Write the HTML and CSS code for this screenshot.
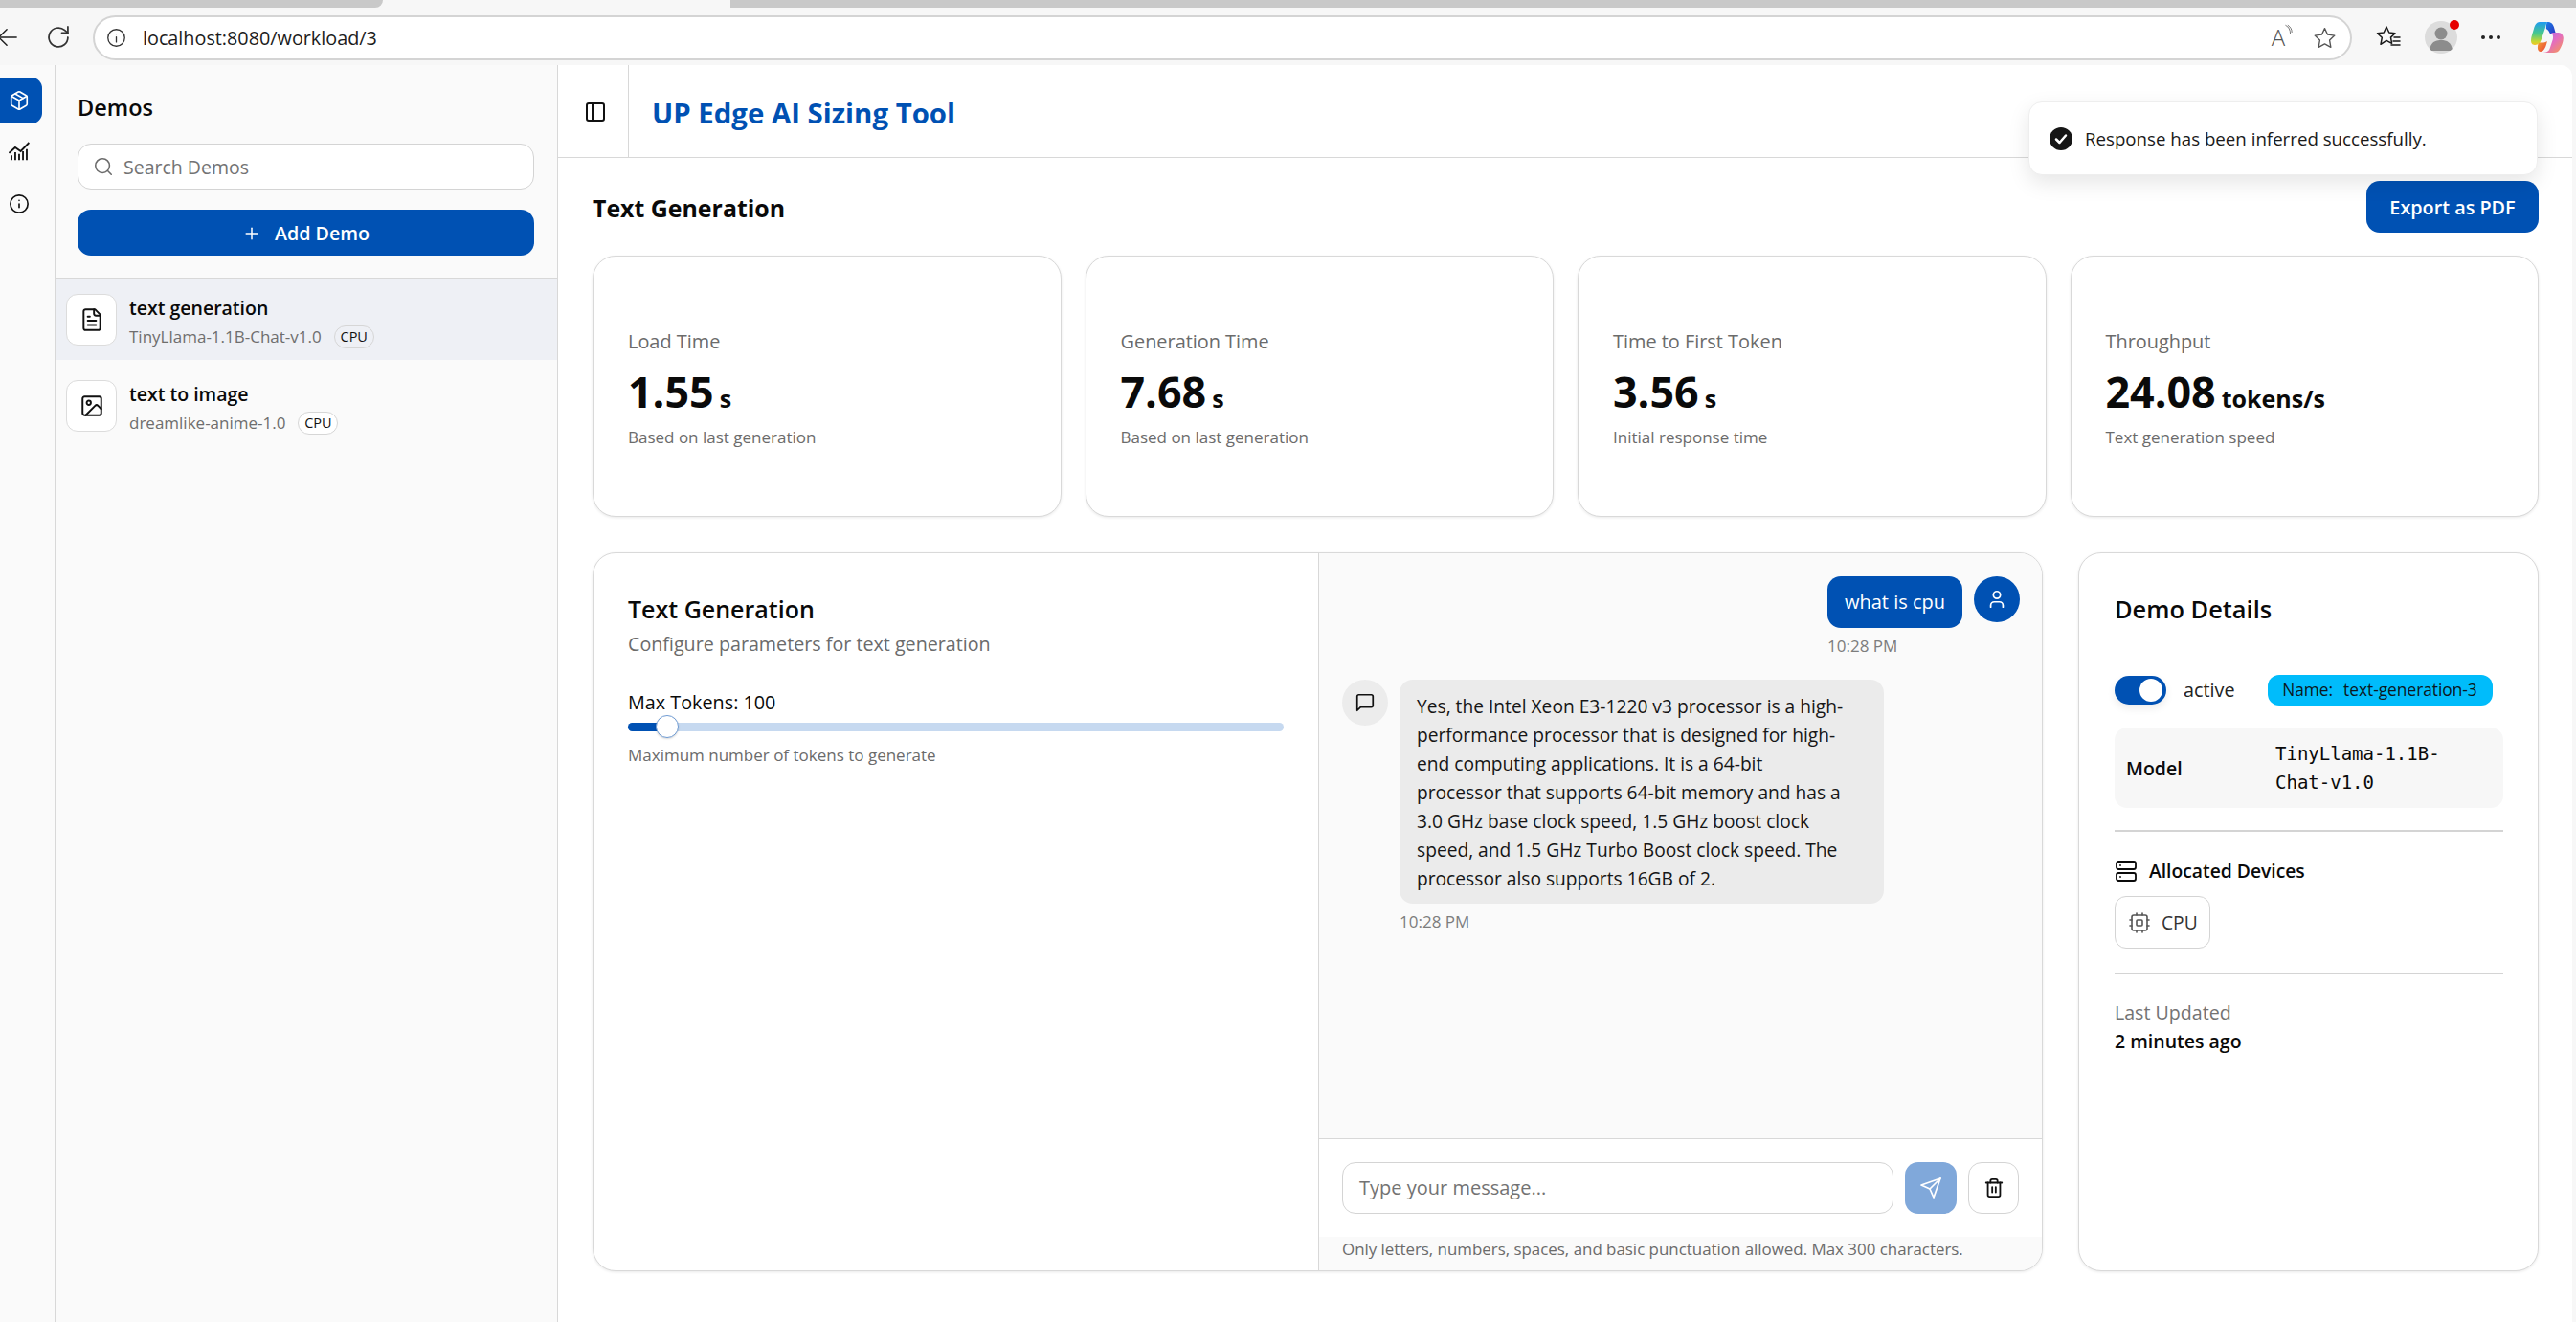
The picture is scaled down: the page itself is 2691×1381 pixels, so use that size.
FILE: index.html
```html
<!DOCTYPE html>
<html lang="en">
<head>
<meta charset="utf-8">
<title>UP Edge AI Sizing Tool</title>
<link rel="stylesheet" href="styles.css">
</head>
<body>
<div class="tabstrip"><span class="tab-a"></span><span class="tab-gap"></span><span class="tab-b"></span></div>
<div class="toolbar">
  <svg class="ic back" viewBox="0 0 24 24"><path d="M22 12H2"/><path d="M11 3l-9 9 9 9"/></svg>
  <svg class="ic reload" viewBox="0 0 24 24"><path d="M20.500 12a8.500 8.500 0 1 1-3-6.500L20.500 8"/><path d="M20.500 2.500V8H15"/></svg>
  <div class="addr">
    <svg class="ic addr-info" viewBox="0 0 24 24"><circle cx="12" cy="12" r="10"/><path d="M12 17v-6"/><path d="M12 7.500h.01"/></svg>
    <span class="url">localhost:8080/workload/3</span>
    <span class="read"><span class="read-a">A</span><svg class="ic read-w" viewBox="0 0 10 16"><path d="M1 1c4 2 6 6 6 11"/><path d="M4 1c3 2 5 5 5 9"/></svg></span>
    <svg class="ic addr-star" viewBox="0 0 24 24"><path d="M12 2.500l3 6.300 6.900.9-5 4.800 1.200 6.900-6.100-3.300-6.100 3.300 1.200-6.900-5-4.800 6.900-.9z"/></svg>
  </div>
  <svg class="ic fav" viewBox="0 0 28 28"><path d="M12 3l2.800 6 6.200.8-4.500 4.300 1.100 6.200-5.600-3-6 4 1.300-7-4.800-4.500 6.700-.8z"/><path d="M20 14h6"/><path d="M19 18h7"/><path d="M17 22h9"/></svg>
  <span class="avatar"><svg viewBox="0 0 34 34"><circle cx="17" cy="13" r="6.500"/><path d="M5 31c1-9 6-11 12-11s11 2 12 11z"/></svg><i class="dot"></i></span>
  <span class="more"><i></i><i></i><i></i></span>
  <svg class="copilot" viewBox="0 0 34 32">
    <defs>
      <linearGradient id="cpa" x1="0" y1="0" x2="0" y2="1"><stop offset="0" stop-color="#1f9bf0"/><stop offset=".5" stop-color="#48c98a"/><stop offset=".85" stop-color="#c8d733"/><stop offset="1" stop-color="#f3c623"/></linearGradient>
      <linearGradient id="cpb" x1="0" y1="0" x2="1" y2="1"><stop offset="0" stop-color="#9a6cf0"/><stop offset=".5" stop-color="#e36cc0"/><stop offset="1" stop-color="#f79a50"/></linearGradient>
      <linearGradient id="cpc" x1="0" y1="0" x2="1" y2="1"><stop offset="0" stop-color="#f5a030"/><stop offset="1" stop-color="#e8413c"/></linearGradient>
      <linearGradient id="cpd" x1="0" y1="0" x2="1" y2="1"><stop offset="0" stop-color="#1a7fe8"/><stop offset="1" stop-color="#2b35c0"/></linearGradient>
    </defs>
    <path fill="url(#cpc)" d="M8 21c3 1 6 1 9-1-1 5-3 11-7 11-3 0-4-4-2-10z"/>
    <path fill="url(#cpd)" d="M17 0c4 0 6 2 7 5l2 7h-6c-1-2-2-4-4-5 0-3 0-6 1-7z"/>
    <path fill="url(#cpa)" d="M9 0h9c-2 0-2 3-3 6L11 18c-1 3-3 6-7 6-3 0-4-2-4-5 0-3 2-8 3-12C4 3 6 0 9 0z"/>
    <path fill="url(#cpb)" d="M21 11h8c3 0 5 3 5 6 0 4-2 9-4 12-1 2-3 3-6 3H11c5 0 8-1 9-5l3-9c.5-3 0-6-2-7z"/>
  </svg>
</div>
<div class="app">
  <nav class="rail">
    <a class="rail-btn is-active"><svg class="ic rail-ic" viewBox="0 0 24 24"><path d="m7.500 4.270 9 5.150"/><path d="M21 8a2 2 0 0 0-1-1.730l-7-4a2 2 0 0 0-2 0l-7 4A2 2 0 0 0 3 8v8a2 2 0 0 0 1 1.730l7 4a2 2 0 0 0 2 0l7-4A2 2 0 0 0 21 16Z"/><path d="m3.300 7 8.700 5 8.700-5"/><path d="M12 22V12"/></svg></a>
    <a class="rail-btn"><svg class="ic rail-chart" viewBox="0 0 24 24"><path d="M.5 13l7-6.500 6.300 4.400L23.300 1.100"/><path d="M3.300 21v-5.400"/><path d="M7.600 21v-9"/><path d="M12 21v-7.200"/><path d="M16.400 21V10.900"/><path d="M20.700 21V8.400"/></svg></a>
    <a class="rail-btn"><svg class="ic rail-ic" viewBox="0 0 24 24"><circle cx="12" cy="12" r="10"/><path d="M12 16v-4"/><path d="M12 8h.01"/></svg></a>
  </nav>
  <aside class="sidebar">
    <div class="side-top">
      <h2 class="side-title">Demos</h2>
      <div class="search">
        <svg class="ic search-ic" viewBox="0 0 24 24"><circle cx="11" cy="11" r="8"/><path d="m21 21-4.300-4.300"/></svg>
        <span class="search-ph">Search Demos</span>
      </div>
      <button class="add-btn"><svg class="ic add-ic" viewBox="0 0 24 24"><path d="M5 12h14"/><path d="M12 5v14"/></svg>Add Demo</button>
    </div>
    <div class="demo is-selected">
      <span class="demo-icon"><svg class="ic demo-ic" viewBox="0 0 24 24"><path d="M15 2H6a2 2 0 0 0-2 2v16a2 2 0 0 0 2 2h12a2 2 0 0 0 2-2V7Z"/><path d="M14 2v4a2 2 0 0 0 2 2h4"/><path d="M10 9H8"/><path d="M16 13H8"/><path d="M16 17H8"/></svg></span>
      <div class="demo-text">
        <div class="demo-name">text generation</div>
        <div class="demo-sub"><span>TinyLlama-1.1B-Chat-v1.0</span><span class="badge">CPU</span></div>
      </div>
    </div>
    <div class="demo">
      <span class="demo-icon"><svg class="ic demo-ic" viewBox="0 0 24 24"><rect x="3" y="3" width="18" height="18" rx="2"/><circle cx="9" cy="9" r="2"/><path d="m21 15-3.086-3.086a2 2 0 0 0-2.828 0L6 21"/></svg></span>
      <div class="demo-text">
        <div class="demo-name">text to image</div>
        <div class="demo-sub"><span>dreamlike-anime-1.0</span><span class="badge">CPU</span></div>
      </div>
    </div>
  </aside>
  <main class="main">
    <header class="topbar">
      <span class="toggle-cell"><svg class="ic panel-ic" viewBox="0 0 24 24"><rect x="3" y="3" width="18" height="18" rx="2"/><path d="M9 3v18"/></svg></span>
      <h1 class="app-title">UP Edge AI Sizing Tool</h1>
    </header>
    <div class="toast">
      <svg class="toast-ic" viewBox="0 0 24 24"><circle cx="12" cy="12" r="12"/><path d="M7 12.500l3.500 3.500L17 8.500"/></svg>
      <span>Response has been inferred successfully.</span>
    </div>
    <section class="content">
      <div class="page-head">
        <h2 class="page-title">Text Generation</h2>
        <button class="export">Export as PDF</button>
      </div>
      <div class="stats">
        <div class="card stat"><div class="stat-label">Load Time</div><div class="stat-value">1.55<span class="unit">s</span></div><div class="stat-sub">Based on last generation</div></div>
        <div class="card stat"><div class="stat-label">Generation Time</div><div class="stat-value">7.68<span class="unit">s</span></div><div class="stat-sub">Based on last generation</div></div>
        <div class="card stat"><div class="stat-label">Time to First Token</div><div class="stat-value">3.56<span class="unit">s</span></div><div class="stat-sub">Initial response time</div></div>
        <div class="card stat"><div class="stat-label">Throughput</div><div class="stat-value">24.08<span class="unit">tokens/s</span></div><div class="stat-sub">Text generation speed</div></div>
      </div>
      <div class="lower">
        <div class="card workspace">
          <div class="params">
            <h3 class="params-title">Text Generation</h3>
            <p class="params-sub">Configure parameters for text generation</p>
            <div class="param-label">Max Tokens: 100</div>
            <div class="slider"><span class="slider-fill"></span><span class="slider-thumb"></span></div>
            <div class="param-help">Maximum number of tokens to generate</div>
          </div>
          <div class="chat">
            <div class="messages">
              <div class="msg msg-user">
                <div class="msg-col">
                  <div class="bubble bubble-user">what is cpu</div>
                  <div class="msg-time">10:28 PM</div>
                </div>
                <span class="msg-avatar avatar-user"><svg class="ic msg-ic" viewBox="0 0 24 24"><path d="M19 21v-2a4 4 0 0 0-4-4H9a4 4 0 0 0-4 4v2"/><circle cx="12" cy="7" r="4"/></svg></span>
              </div>
              <div class="msg">
                <span class="msg-avatar avatar-bot"><svg class="ic msg-ic" viewBox="0 0 24 24"><path d="M21 15a2 2 0 0 1-2 2H7l-4 4V5a2 2 0 0 1 2-2h14a2 2 0 0 1 2 2z"/></svg></span>
                <div class="msg-col">
                  <div class="bubble bubble-bot">Yes, the Intel Xeon E3-1220 v3 processor is a high-<br>performance processor that is designed for high-<br>end computing applications. It is a 64-bit<br>processor that supports 64-bit memory and has a<br>3.0 GHz base clock speed, 1.5 GHz boost clock<br>speed, and 1.5 GHz Turbo Boost clock speed. The<br>processor also supports 16GB of 2.</div>
                  <div class="msg-time">10:28 PM</div>
                </div>
              </div>
            </div>
            <div class="composer">
              <div class="chat-input">Type your message...</div>
              <button class="send"><svg class="ic send-ic" viewBox="0 0 24 24"><path d="m22 2-7 20-4-9-9-4Z"/><path d="M22 2 11 13"/></svg></button>
              <button class="trash"><svg class="ic trash-ic" viewBox="0 0 24 24"><path d="M3 6h18"/><path d="M19 6v14c0 1-1 2-2 2H7c-1 0-2-1-2-2V6"/><path d="M8 6V4c0-1 1-2 2-2h4c1 0 2 1 2 2v2"/><path d="M10 11v6"/><path d="M14 11v6"/></svg></button>
            </div>
            <div class="hint">Only letters, numbers, spaces, and basic punctuation allowed. Max 300 characters.</div>
          </div>
        </div>
        <div class="card details">
          <h3 class="details-title">Demo Details</h3>
          <div class="status-row">
            <span class="switch"><span class="switch-thumb"></span></span>
            <span class="status-text">active</span>
            <span class="name-badge"><span>Name:</span><span>text-generation-3</span></span>
          </div>
          <div class="model-box"><span class="model-key">Model</span><code class="model-val">TinyLlama-1.1B-Chat-v1.0</code></div>
          <div class="rule rule-thick"></div>
          <div class="alloc"><svg class="ic alloc-ic" viewBox="0 0 24 24"><rect x="2" y="2" width="20" height="8" rx="2"/><rect x="2" y="14" width="20" height="8" rx="2"/><path d="M6 6h.01"/><path d="M6 18h.01"/></svg>Allocated Devices</div>
          <div class="chip"><svg class="ic chip-ic" viewBox="0 0 24 24"><rect x="4" y="4" width="16" height="16" rx="2"/><rect x="9" y="9" width="6" height="6" rx="1"/><path d="M15 2v2"/><path d="M15 20v2"/><path d="M2 15h2"/><path d="M2 9h2"/><path d="M20 15h2"/><path d="M20 9h2"/><path d="M9 2v2"/><path d="M9 20v2"/></svg>CPU</div>
          <div class="rule rule-thin"></div>
          <div class="updated-label">Last Updated</div>
          <div class="updated-val">2 minutes ago</div>
        </div>
      </div>
    </section>
  </main>
</div>
</body>
</html>
```
FILE: styles.css
```css
* { box-sizing: border-box; }
html, body { margin: 0; padding: 0; }
body {
  width: 2691px;
  height: 1381px;
  overflow: hidden;
  background: #f7f7f7;
  font-family: "Open Sans", "Noto Sans", sans-serif;
  color: #0a0a0a;
}
h1, h2, h3, p { margin: 0; }
button { font-family: inherit; border: 0; padding: 0; }

.ic { fill: none; stroke: currentColor; stroke-width: 2; stroke-linecap: round; stroke-linejoin: round; flex: none; display: block; }

/* browser chrome */
.tabstrip { display: flex; height: 8px; background: #f7f7f7; }
.tab-a { width: 400px; background: #c9c9c9; border-bottom-right-radius: 8px; }
.tab-gap { width: 363px; }
.tab-b { flex: 1; background: #c9c9c9; }
.toolbar { height: 60px; display: flex; align-items: center; padding: 2px 13px 0 0; background: #f7f7f7; position: relative; }
.back { width: 22px; height: 22px; margin-left: -3px; stroke-width: 1.600; color: #1f1f1f; }
.reload { width: 28px; height: 28px; margin-left: 28px; stroke-width: 1.500; color: #333; }
.addr { width: 2375px; height: 47px; margin-left: 22px; border: 2px solid #d4d4d4; border-radius: 24px; background: #fff; display: flex; align-items: center; padding: 0 14px 0 12px; }
.addr-info { width: 21px; height: 21px; stroke-width: 1.500; color: #333; }
.url { font-size: 19.800px; margin-left: 17px; color: #1c1c1c; flex: 1; }
.read { display: flex; margin-right: 21px; color: #555; position: relative; }
.read-a { font-size: 24px; line-height: 28px; font-weight: 300; }
.read-w { width: 8px; height: 14px; stroke-width: 1; }
.addr-star { width: 25px; height: 25px; stroke-width: 1.300; color: #555; }
.fav { width: 28px; height: 28px; margin-left: 24px; stroke-width: 1.500; color: #1a1a1a; }
.avatar { position: relative; width: 34px; height: 34px; margin-left: 24px; border-radius: 50%; background: #dcdcdc; overflow: visible; }
.avatar svg { display: block; width: 34px; height: 34px; fill: #8c8c8c; border-radius: 50%; }
.dot { position: absolute; right: -2px; top: -1px; width: 10px; height: 10px; border-radius: 50%; background: #e60000; }
.more { display: flex; gap: 4px; margin-left: 25px; }
.more i { width: 4px; height: 4px; border-radius: 50%; background: #222; }
.copilot { width: 34px; height: 32px; margin-left: 32px; }

/* app frame */
.app { display: flex; height: 1313px; width: 2687px; }
.rail { width: 58px; flex: none; background: #fafafa; border-right: 1px solid #d8d8d8; padding-top: 13px; display: flex; flex-direction: column; gap: 6px; overflow: hidden; }
.rail-btn { width: 49px; height: 48px; margin-left: -5px; border-radius: 0 11px 11px 0; display: flex; align-items: center; justify-content: center; color: #111; }
.rail-btn.is-active { background: #0051b3; color: #fff; }
.rail-ic { width: 22px; height: 22px; stroke-width: 1.800; }
.rail-chart { width: 22px; height: 22px; stroke-width: 2; stroke-linecap: butt; stroke-linejoin: miter; }

/* sidebar */
.sidebar { width: 525px; flex: none; background: #fafafa; border-right: 1px solid #d8d8d8; }
.side-top { padding: 30px 24px 23px 23px; border-bottom: 1px solid #d8d8d8; }
.side-title { font-size: 23.500px; font-weight: 600; line-height: 30px; margin-top: -1px; padding-bottom: 1px; }
.search { height: 48px; margin-top: 22px; background: #fff; border: 1px solid #d4d4d4; border-radius: 14px; display: flex; align-items: center; padding-left: 15px; gap: 10px; }
.search-ic { width: 22px; height: 22px; color: #6b6b6b; stroke-width: 1.700; }
.search-ph { font-size: 19.500px; color: #737373; }
.add-btn { width: 100%; height: 48px; margin-top: 21px; padding-top: 1px; background: #0051b3; color: #fff; border-radius: 14px; font-size: 19.700px; font-weight: 600; display: flex; align-items: center; justify-content: center; gap: 14px; }
.add-ic { width: 20px; height: 20px; stroke-width: 1.800; }
.demo { height: 85px; padding: 16px 12px 0 11px; display: flex; gap: 13px; margin-bottom: 5px; }
.demo.is-selected { background: #eef0f5; }
.demo-icon { width: 53px; height: 54px; background: #fff; border: 1px solid #dcdcdc; border-radius: 12px; display: flex; align-items: center; justify-content: center; flex: none; }
.demo-ic { width: 26px; height: 26px; stroke-width: 1.800; color: #111; }
.demo-name { font-size: 19.500px; font-weight: 600; line-height: 30px; }
.demo-sub { display: flex; align-items: center; gap: 13px; font-size: 17px; line-height: 24px; color: #6e6e6e; margin-top: 3px; }
.badge { border: 1px solid #d6d6d6; border-radius: 12px; height: 24px; width: 42px; font-size: 14.500px; font-weight: 500; color: #111; background: #fff; text-align: center; line-height: 22px; }
.is-selected .badge { background: transparent; }

/* main */
.main { flex: 1; min-width: 0; background: #fff; border-top-right-radius: 12px; position: relative; }
.topbar { height: 97px; display: flex; align-items: center; border-bottom: 1px solid #d8d8d8; }
.toggle-cell { width: 74px; height: 96px; padding: 2px 0 0 4px; border-right: 1px solid #d8d8d8; display: flex; align-items: center; justify-content: center; flex: none; }
.panel-ic { width: 24px; height: 24px; stroke-width: 2; color: #111; }
.app-title { margin-left: 24px; margin-top: 3px; font-size: 29.400px; font-weight: 700; color: #0051b3; }
.toast { position: absolute; top: 38px; right: 36px; width: 532px; height: 77px; background: #fff; border: 1px solid #eee; border-radius: 14px; box-shadow: 0 8px 22px rgba(0,0,0,.1); display: flex; align-items: center; padding-left: 21px; gap: 13px; font-size: 18.700px; font-weight: 500; color: #1a1a1a; z-index: 2; }
.toast-ic { width: 24px; height: 24px; flex: none; }
.toast-ic circle { fill: #161616; }
.toast-ic path { fill: none; stroke: #fff; stroke-width: 2.500; stroke-linecap: round; stroke-linejoin: round; }

.content { padding: 24px 35px 0 36px; }
.page-head { display: flex; justify-content: space-between; align-items: center; height: 54px; }
.page-title { font-size: 24.900px; font-weight: 700; margin-top: 1px; }
.export { width: 180px; height: 54px; background: #0051b3; color: #fff; border-radius: 14px; font-size: 19.800px; font-weight: 600; }

.card { background: #fff; border: 1.500px solid #d9d9d9; border-radius: 24px; box-shadow: 0 1px 3px rgba(0,0,0,.09); }
.stats { display: grid; grid-template-columns: repeat(4, 1fr); gap: 25px; margin-top: 24px; }
.stat { height: 273px; padding: 74px 36px 0; }
.stat-label { font-size: 19.900px; line-height: 30px; color: #6b6b6b; }
.stat-value { font-size: 44.800px; font-weight: 700; line-height: 56px; margin-top: 9px; display: flex; align-items: baseline; }
.unit { font-size: 25px; font-weight: 700; margin-left: 6px; }
.stat-sub { font-size: 17px; line-height: 24px; color: #6b6b6b; margin-top: 1px; }

.lower { display: grid; grid-template-columns: 1515px 481px; gap: 37px; margin-top: 37px; }
.workspace { height: 751px; display: flex; overflow: hidden; }
.params { width: 757px; flex: none; padding: 40px 36px 0; }
.params-title { font-size: 25px; font-weight: 600; line-height: 36px; }
.params-sub { font-size: 19.700px; line-height: 28px; color: #6b6b6b; margin-top: 5px; }
.param-label { font-size: 19.800px; font-weight: 500; line-height: 28px; margin-top: 33px; }
.slider { position: relative; height: 9px; margin-top: 7px; border-radius: 5px; background: #c6d9f0; }
.slider-fill { position: absolute; left: 0; top: 0; bottom: 0; width: 32px; background: #0051b3; border-radius: 5px 0 0 5px; }
.slider-thumb { position: absolute; left: 29px; top: -8px; width: 24px; height: 24px; background: #fff; border: 1.500px solid #6f9bd3; border-radius: 50%; box-shadow: 0 1px 2px rgba(0,0,0,.15); }
.param-help { font-size: 17px; line-height: 24px; color: #6b6b6b; margin-top: 13px; }

.chat { flex: 1; min-width: 0; display: flex; flex-direction: column; border-left: 1px solid #d8d8d8; }
.messages { flex: 1; background: #fafafa; padding: 24px 23px 0 24px; display: flex; flex-direction: column; gap: 24px; }
.msg { display: flex; gap: 12px; }
.msg-user { justify-content: flex-end; }
.msg-col { display: flex; flex-direction: column; gap: 8px; }
.msg-avatar { width: 48px; height: 48px; border-radius: 50%; display: flex; align-items: center; justify-content: center; flex: none; }
.avatar-user { background: #0051b3; color: #fff; }
.avatar-bot { background: #ececec; color: #111; }
.msg-ic { width: 22px; height: 22px; stroke-width: 1.900; }
.bubble { font-size: 19.200px; line-height: 30px; border-radius: 14px; padding: 13px 18px 11px; }
.bubble-user { background: #0051b3; color: #fff; width: 141px; height: 54px; text-align: center; padding: 12px 0; font-size: 20px; }
.bubble-bot { background: #ebebeb; width: 506px; color: #161616; white-space: nowrap; }
.msg-time { font-size: 17px; line-height: 22px; color: #7d7d7d; }
.composer { height: 103px; flex: none; border-top: 1px solid #d8d8d8; background: #fff; padding: 24px 23px 24px 24px; display: flex; gap: 12px; }
.chat-input { width: 576px; height: 54px; border: 1.500px solid #d4d4d4; border-radius: 14px; padding-left: 17px; font-size: 20px; line-height: 52px; color: #737373; }
.send { width: 54px; height: 54px; background: #80a8da; border-radius: 14px; color: #fff; display: flex; align-items: center; justify-content: center; }
.send-ic { width: 24px; height: 24px; stroke-width: 1.700; }
.trash { width: 53px; height: 54px; background: #fff; border: 1px solid #d4d4d4; border-radius: 14px; display: flex; align-items: center; justify-content: center; color: #111; }
.trash-ic { width: 22px; height: 24px; stroke-width: 2; }
.hint { height: 35px; flex: none; background: #fafafa; padding: 0 24px; font-size: 16.900px; line-height: 26px; color: #6b6b6b; }

.details { height: 751px; padding: 40px 36px 0 37px; }
.details-title { font-size: 25.400px; font-weight: 600; line-height: 36px; }
.status-row { display: flex; align-items: center; margin-top: 50px; height: 33px; }
.switch { width: 54px; height: 30px; border-radius: 15px; background: #0051b3; position: relative; box-shadow: 0 4px 8px rgba(0,0,0,.08); flex: none; }
.switch-thumb { position: absolute; right: 4px; top: 3px; width: 24px; height: 24px; border-radius: 50%; background: #fff; }
.status-text { font-size: 19.800px; margin-left: 18px; color: #222; }
.name-badge { margin-left: 34px; width: 235px; height: 32px; border-radius: 12px; background: #00bcfb; font-size: 17.300px; font-weight: 500; display: flex; align-items: center; justify-content: center; gap: 11px; color: #0c1720; }
.model-box { margin-top: 23px; height: 84px; border-radius: 13px; background: #f7f7f7; display: flex; align-items: center; padding: 0 12px; }
.model-key { width: 156px; font-size: 19.500px; font-weight: 600; flex: none; }
.model-val { font-family: "DejaVu Sans Mono", "Liberation Mono", monospace; font-size: 19px; line-height: 30px; width: 200px; }
.rule { background: #d4d4d4; }
.rule-thick { height: 2px; margin-top: 23px; }
.rule-thin { height: 1px; margin-top: 25px; }
.alloc { display: flex; align-items: center; gap: 12px; margin-top: 28px; font-size: 19.300px; font-weight: 600; line-height: 26px; }
.alloc-ic { width: 24px; height: 24px; stroke-width: 1.800; }
.chip { display: flex; align-items: center; gap: 11px; width: 100px; height: 55px; margin-top: 13px; padding-left: 13px; border: 1px solid #d4d4d4; border-radius: 12px; font-size: 19.200px; color: #333; }
.chip-ic { width: 24px; height: 24px; stroke-width: 1.600; color: #555; }
.updated-label { font-size: 19.600px; line-height: 28px; color: #737373; margin-top: 27px; }
.updated-val { font-size: 19.500px; font-weight: 600; line-height: 28px; margin-top: 2px; }
```
